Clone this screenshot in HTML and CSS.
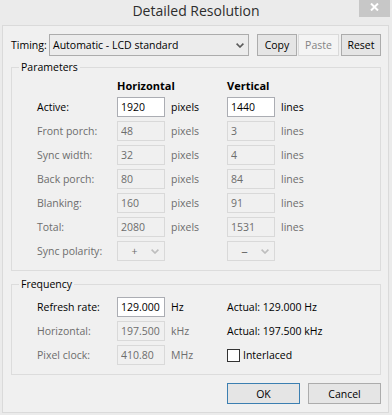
FILE: index.html
```html
<!DOCTYPE html>
<html>
<head>
<meta charset="utf-8">
<title>Detailed Resolution</title>
<link rel="stylesheet" href="styles.css">
</head>
<body>
<div class="window">
  <div class="titlebar">
    <span class="title">Detailed Resolution</span>
    <button class="close" aria-label="Close">
      <svg width="9" height="8" viewBox="0 0 9 8"><path d="M1 0.5 L8 7.5 M8 0.5 L1 7.5" stroke="#fff" stroke-width="2" fill="none"/></svg>
    </button>
  </div>
  <div class="client">
    <div class="timing-row">
      <span class="timing-label">Timing:</span>
      <div class="combo">
        <span>Automatic - LCD standard</span>
        <svg class="chev" width="8" height="5" viewBox="0 0 8 5"><path d="M0.6 0.6 L4 4 L7.4 0.6" stroke="#5a5a5a" stroke-width="1.6" fill="none"/></svg>
      </div>
      <button class="btn copy">Copy</button>
      <button class="btn paste" disabled>Paste</button>
      <button class="btn reset">Reset</button>
    </div>

    <fieldset class="group params">
      <legend class="group-legend">Parameters</legend>
      <div class="params-grid">
        <span></span><span class="head">Horizontal</span><span></span><span class="head">Vertical</span><span></span>

        <span class="lbl">Active:</span>
        <input class="field" type="text" value="1920">
        <span class="unit">pixels</span>
        <input class="field" type="text" value="1440">
        <span class="unit">lines</span>

        <span class="lbl off">Front porch:</span>
        <input class="field" type="text" value="48" disabled>
        <span class="unit off">pixels</span>
        <input class="field" type="text" value="3" disabled>
        <span class="unit off">lines</span>

        <span class="lbl off">Sync width:</span>
        <input class="field" type="text" value="32" disabled>
        <span class="unit off">pixels</span>
        <input class="field" type="text" value="4" disabled>
        <span class="unit off">lines</span>

        <span class="lbl off">Back porch:</span>
        <input class="field" type="text" value="80" disabled>
        <span class="unit off">pixels</span>
        <input class="field" type="text" value="84" disabled>
        <span class="unit off">lines</span>

        <span class="lbl off">Blanking:</span>
        <input class="field" type="text" value="160" disabled>
        <span class="unit off">pixels</span>
        <input class="field" type="text" value="91" disabled>
        <span class="unit off">lines</span>

        <span class="lbl off">Total:</span>
        <input class="field" type="text" value="2080" disabled>
        <span class="unit off">pixels</span>
        <input class="field" type="text" value="1531" disabled>
        <span class="unit off">lines</span>

        <span class="lbl off">Sync polarity:</span>
        <div class="mini-combo">
          <span class="val">+</span>
          <svg width="8" height="5" viewBox="0 0 8 5"><path d="M0.6 0.6 L4 4 L7.4 0.6" stroke="#bdbdbd" stroke-width="1.6" fill="none"/></svg>
        </div>
        <span></span>
        <div class="mini-combo">
          <span class="val dash">–</span>
          <svg width="8" height="5" viewBox="0 0 8 5"><path d="M0.6 0.6 L4 4 L7.4 0.6" stroke="#bdbdbd" stroke-width="1.6" fill="none"/></svg>
        </div>
        <span></span>
      </div>
    </fieldset>

    <fieldset class="group freq">
      <legend class="group-legend">Frequency</legend>
      <div class="freq-grid">
        <span class="lbl">Refresh rate:</span>
        <input class="field" type="text" value="129.000">
        <span class="unit">Hz</span>
        <span class="actual">Actual: 129.000 Hz</span>

        <span class="lbl off">Horizontal:</span>
        <input class="field" type="text" value="197.500" disabled>
        <span class="unit off">kHz</span>
        <span class="actual">Actual: 197.500 kHz</span>

        <span class="lbl off">Pixel clock:</span>
        <input class="field" type="text" value="410.80" disabled>
        <span class="unit off">MHz</span>
        <label class="check"><input type="checkbox" class="box"><span>Interlaced</span></label>
      </div>
    </fieldset>

    <div class="footer">
      <button class="btn dlg default">OK</button>
      <button class="btn dlg">Cancel</button>
    </div>
  </div>
</div>
</body>
</html>
```

FILE: styles.css
```css
html, body {
  margin: 0;
  padding: 0;
}
body {
  background: #ebebeb;
  font-family: "Open Sans", "Noto Sans", sans-serif;
  font-size: 10.5px;
  color: #000;
  width: 392px;
  height: 415px;
  overflow: hidden;
}
.window {
  width: 392px;
  height: 415px;
  display: flex;
  flex-direction: column;
}
.titlebar {
  height: 25px;
  position: relative;
  display: flex;
  justify-content: center;
  flex: none;
}
.title {
  font-size: 14px;
  line-height: 22px;
  color: #2d2d2d;
}
.close {
  position: absolute;
  right: 2px;
  top: 0;
  width: 31px;
  height: 17px;
  padding: 0;
  border: 0;
  background: #c7c7c7;
  display: flex;
  align-items: center;
  justify-content: center;
}
.close svg {
  margin-top: -3px;
}
.client {
  margin-left: 2px;
  width: 387px;
  height: 388px;
  box-sizing: border-box;
  border: 1px solid #dadada;
  background: #f0f0f0;
  padding: 8px 7px 0 8px;
}
.timing-row {
  display: flex;
  align-items: center;
  height: 22px;
}
.timing-label {
  width: 38px;
  flex: none;
}
.combo {
  width: 200px;
  height: 22px;
  box-sizing: border-box;
  border: 1px solid #acacac;
  background: #ececec;
  display: flex;
  align-items: center;
  justify-content: space-between;
  padding: 0 4px 0 3px;
  flex: none;
}
.btn {
  height: 22px;
  box-sizing: border-box;
  border: 1px solid #acacac;
  background: #e5e5e5;
  font: inherit;
  color: #000;
  padding: 0;
  flex: none;
}
.copy { margin-left: 8px; width: 40px; }
.paste { margin-left: 1px; width: 41px; }
.reset { margin-left: 2px; width: 40px; }
.btn:disabled {
  background: #f4f4f4;
  border-color: #dadada;
  color: #838383;
}
.group {
  margin: 4px 0 0;
  padding: 0;
  border: 1px solid #dcdcdc;
  min-width: 0;
}
.group-legend {
  margin-left: 7px;
  padding: 0 2px;
  line-height: 14px;
}
.params-grid {
  display: grid;
  grid-template-columns: 80px 48px 62px 48px 1fr;
  grid-template-rows: 16px repeat(7, 20px);
  row-gap: 4px;
  align-items: center;
  padding: 3px 0 9px 25px;
}
.head {
  font-weight: 700;
  font-size: 11px;
  white-space: nowrap;
}
.lbl { white-space: nowrap; }
.unit { padding-left: 6px; }
.off { color: #6d6d6d; }
.field {
  width: 48px;
  height: 20px;
  box-sizing: border-box;
  border: 1px solid #abadb3;
  background: #fff;
  padding: 0 3px;
  margin: 0;
  font: inherit;
  color: #000;
  outline: none;
}
.field:disabled {
  border-color: #d9d9d9;
  background: #f0f0f0;
  color: #6d6d6d;
}
.mini-combo {
  width: 48px;
  height: 20px;
  box-sizing: border-box;
  border: 1px solid #d9d9d9;
  display: flex;
  align-items: center;
  color: #6d6d6d;
}
.mini-combo .val {
  width: 33px;
  text-align: center;
}
.mini-combo .dash {
  font-size: 13px;
}
.freq {
  margin-top: 6px;
}
.freq-grid {
  display: grid;
  grid-template-columns: 80px 48px 62px 1fr;
  grid-template-rows: repeat(3, 20px);
  row-gap: 4px;
  align-items: center;
  padding: 6px 0 9px 25px;
}
.check {
  display: flex;
  align-items: center;
  gap: 3px;
}
.box {
  appearance: none;
  -webkit-appearance: none;
  width: 13px;
  height: 13px;
  margin: 0;
  box-sizing: border-box;
  border: 1px solid #333;
  background: #fff;
}
.footer {
  display: flex;
  justify-content: flex-end;
  gap: 8px;
  margin-top: 8px;
}
.dlg {
  width: 73px;
  height: 21px;
}
.default {
  border-color: #3c7fb1;
}
```
